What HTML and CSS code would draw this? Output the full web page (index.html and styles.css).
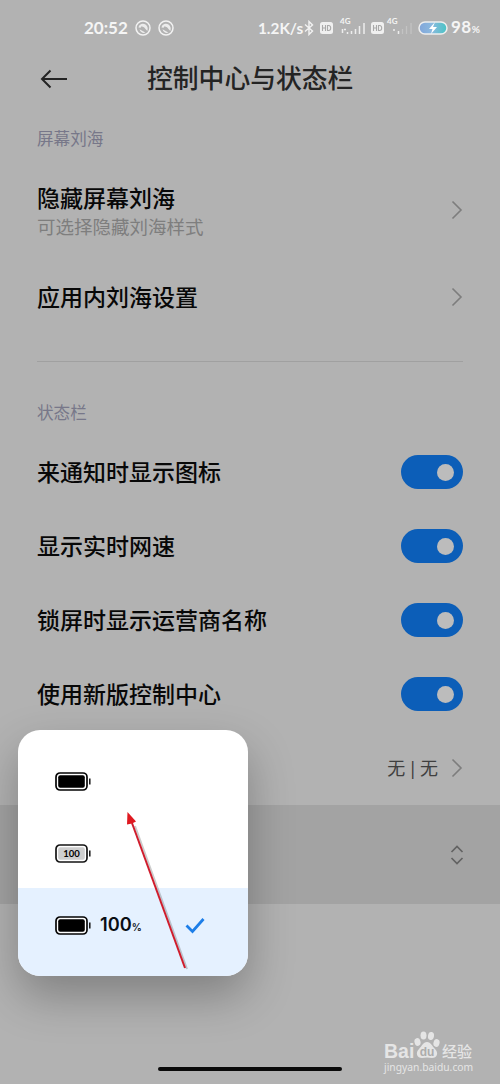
FILE: index.html
```html
<!DOCTYPE html>
<html lang="zh-CN">
<head>
<meta charset="utf-8">
<title>控制中心与状态栏</title>
<link rel="stylesheet" href="styles.css">
</head>
<body>
<svg class="defs" aria-hidden="true">
  <symbol id="chevron" viewBox="0 0 12 20"><path d="M1.500 1.500 10 10l-8.500 8.500" fill="none" stroke="#7d7d7d" stroke-width="1.600"/></symbol>
  <symbol id="ring" viewBox="0 0 16 16"><circle cx="8" cy="8" r="7" fill="none" stroke="#f2f2f2" stroke-width="1.500"/><path d="M3.500 7.500C4 3.800 8 3 10.500 4.500c2 1.300 2.800 3.800 1.800 6.500L9 7.200 6.500 6.300 5.600 7.800zM4.500 9.300l5.800 3.300c-2 1-4.800 0-5.800-3.300z" fill="#ececec"/></symbol>
  <symbol id="hd" viewBox="0 0 13 12"><rect width="13" height="12" rx="2.500" fill="#f0f0f0"/><path d="M2.500 3v6M5.500 3v6M2.500 6h3M7.500 3.500v5h1.200q2-.2 2-2.500t-2-2.500z" fill="none" stroke="#aaa" stroke-width="1.100"/></symbol>
  <symbol id="battery" viewBox="0 0 36 19"><rect x="1" y="1" width="31" height="17" rx="4" fill="#fff" stroke="#050505" stroke-width="1.700"/><rect x="3.200" y="3.200" width="26.600" height="12.600" rx="2"/><path d="M34.800 6.500v6" stroke="#111" stroke-width="1.500"/></symbol>
</svg>
<div class="screen">
  <header class="status">
    <span class="clock">20:52</span>
    <svg class="ring"><use href="#ring"/></svg>
    <svg class="ring ring-second"><use href="#ring"/></svg>
    <span class="speed">1.2K/s</span>
    <svg class="bluetooth" viewBox="0 0 10 16"><path d="M1 4.500 8.500 11 5 14.500v-13L8.500 5 1 11.500" fill="none" stroke="#f2f2f2" stroke-width="1.400"/></svg>
    <svg class="hd"><use href="#hd"/></svg>
    <span class="network"><span class="generation">4G</span><svg class="bars" viewBox="0 0 27 14"><path d="M2.500 9v4M4 9.500h2M7.500 12v2M11.500 11v3M15.500 9v5M19.500 6v8M24 3v11" stroke="#ededed" stroke-width="1.500"/></svg></span>
    <svg class="hd hd-second"><use href="#hd"/></svg>
    <span class="network network-second"><span class="generation">4G</span><svg class="bars" viewBox="0 0 27 14"><path d="M7 9v2M11.500 11v3" stroke="#ededed" stroke-width="1.500"/><path d="M15.500 9v5M19.500 6v8M24 3v11" stroke="#c3c3c3" stroke-width="1.300"/></svg></span>
    <svg class="charge" viewBox="0 0 30 14"><defs><linearGradient id="power"><stop stop-color="#82a6da"/><stop offset=".45" stop-color="#8bb9df"/><stop offset="1" stop-color="#48c4c4"/></linearGradient></defs><rect x="1" y="1" width="28" height="12" rx="6" fill="url(#power)" stroke="#eee" stroke-width="1.500"/><path d="m17 1-6 7h3.500L13 13l6-7h-4z" fill="#fff"/></svg>
    <span class="level">98<small>%</small></span>
  </header>
  <div class="titlebar">
    <svg class="back" viewBox="0 0 28 20"><path d="M27 10H2M10.500 1.500 2 10l8.500 8.500" fill="none" stroke="#242424" stroke-width="2"/></svg>
    <h1 class="title">控制中心与状态栏</h1>
  </div>
  <h2 class="label">屏幕刘海</h2>
  <section class="notch">
    <div class="row"><div><div class="name">隐藏屏幕刘海</div><div class="hint">可选择隐藏刘海样式</div></div><svg class="chevron"><use href="#chevron"/></svg></div>
    <div class="row"><div class="name">应用内刘海设置</div><svg class="chevron"><use href="#chevron"/></svg></div>
  </section>
  <hr class="divider">
  <h2 class="label label-status">状态栏</h2>
  <section>
    <div class="row"><div class="name">来通知时显示图标</div><span class="toggle"></span></div>
    <div class="row"><div class="name">显示实时网速</div><span class="toggle"></span></div>
    <div class="row"><div class="name">锁屏时显示运营商名称</div><span class="toggle"></span></div>
    <div class="row"><div class="name">使用新版控制中心</div><span class="toggle"></span></div>
    <div class="row row-end"><span class="value">无 | 无</span><svg class="chevron"><use href="#chevron"/></svg></div>
    <div class="row row-active"><svg class="sorter" viewBox="0 0 14 20"><path d="m1.500 7 5.500-5.500L12.500 7M1.500 13 7 18.500l5.500-5.500" fill="none" stroke="#626262" stroke-width="1.700"/></svg></div>
  </section>
  <footer class="brand">
    <div class="brand-top">
      <span class="brand-bai">Bai</span>
      <svg class="paw" viewBox="0 0 26 28"><g fill="#e5e5e5"><ellipse cx="3.500" cy="11" rx="3" ry="4" transform="rotate(-15 3.500 11)"/><ellipse cx="9.500" cy="4.500" rx="3" ry="4"/><ellipse cx="17" cy="5" rx="3" ry="4" transform="rotate(10 17 5)"/><ellipse cx="22.500" cy="12" rx="3" ry="4" transform="rotate(15 22.500 12)"/><path d="M13 11c4 0 5 4 8 7 4 4 2 9-3 9q-5-1-10 0c-5 0-7-5-3-9 3-3 4-7 8-7z"/></g><text x="13" y="24.500" class="paw-text">du</text></svg>
      <span class="brand-cn">经验</span>
    </div>
    <div class="brand-url">jingyan.baidu.com</div>
  </footer>
  <div class="home"></div>
</div>
<div class="popup">
  <div class="option"><svg class="battery"><use href="#battery"/></svg></div>
  <div class="option"><svg class="battery" viewBox="0 0 36 19"><rect x="1" y="1" width="31" height="17" rx="4" fill="#fff" stroke="#151515" stroke-width="1.700"/><rect x="3.200" y="3.200" width="26.600" height="12.600" rx="2" fill="#cecece"/><path d="M34.800 6.500v6" stroke="#111" stroke-width="1.500"/><text x="16.500" y="13" class="battery-text">100</text></svg></div>
  <div class="option option-selected"><svg class="battery"><use href="#battery"/></svg><span class="percent">100<small>%</small></span><svg class="check" viewBox="0 0 20 17"><path d="m1.500 8.500 6 6L18.500 2" fill="none" stroke="#1d7ee8" stroke-width="2.800"/></svg></div>
</div>
<svg class="pointer" viewBox="0 0 66 164"><path d="M7 15 59 158" transform="translate(2 1)" fill="none" stroke="#555" stroke-opacity=".3" stroke-width="2"/><path d="M6 13 59 158" fill="none" stroke="#d01c2c" stroke-width="2"/><path d="M1.500 2 1 14.500l5-1 4-2z" fill="#df1920"/></svg>
</body>
</html>
```
FILE: styles.css
```css
body { margin: 0; position: relative; width: 500px; height: 1084px; overflow: hidden; font-family: "Noto Sans", "Noto Sans CJK SC", sans-serif; }
svg { display: block; flex: none; }
.defs { position: absolute; width: 0; height: 0; }
.screen { display: flex; flex-direction: column; height: 1084px; background: #b2b2b2; }
.screen > * { flex: none; }
.status { display: flex; align-items: center; height: 54px; padding: 1px 0 0 84px; box-sizing: border-box; color: #f5f5f5; white-space: nowrap; font-family: Lato, "Noto Sans", sans-serif; font-weight: 700; line-height: 20px; }
.clock { width: 51px; font-size: 17px; }
.ring { width: 16px; height: 16px; }
.ring-second { margin-left: 7px; }
.speed { width: 45px; margin-left: 84px; font-size: 15.300px; }
.bluetooth { width: 10px; height: 16px; margin-left: 1px; }
.hd { width: 13px; height: 12px; margin-left: 6px; }
.hd-second { margin-left: 5px; }
.network { display: flex; flex-direction: column; width: 26px; height: 16px; margin: 0 0 3px 7px; }
.network-second { width: 25px; margin-left: 3px; }
.generation { height: 7px; font-size: 8px; line-height: 7px; }
.bars { width: 27px; height: 14px; margin-top: -5px; }
.charge { width: 30px; height: 14px; margin-left: 6px; }
.level { margin-left: 3px; font-size: 17px; letter-spacing: .5px; }
.level small { font-size: 10px; }
.titlebar { display: flex; align-items: center; height: 50px; padding-left: 40px; }
.back { width: 28px; height: 20px; }
.title { margin: -2px 0 0 79px; font-size: 25.800px; line-height: 50px; font-weight: 500; color: #242424; }
.label { height: 40px; margin: 15px 0 0 37px; font-size: 16.600px; line-height: 40px; font-weight: 400; color: #777789; }
.notch { display: flex; flex-direction: column; gap: 13px; margin-top: 14px; }
.row { display: flex; align-items: center; justify-content: space-between; box-sizing: border-box; height: 74px; padding: 0 37px; }
.name { font-size: 23px; line-height: 32px; font-weight: 500; color: #080808; }
.hint { font-size: 18.500px; line-height: 25px; color: #7e7e7e; }
.chevron { width: 12px; height: 20px; }
.divider { width: 426px; height: 1px; margin: 27px 37px 0; border: 0; background: #a0a0a0; }
.label-status { margin-top: 31px; margin-bottom: 2px; }
.toggle { display: flex; align-items: center; justify-content: flex-end; box-sizing: border-box; width: 62px; height: 34px; padding-right: 9px; border-radius: 17px; background: #0c5eb8; }
.toggle::after { content: ""; width: 17px; height: 17px; border-radius: 50%; background: #bcbcbc; }
.row-end { justify-content: flex-end; gap: 13px; }
.value { font-size: 18px; line-height: 24px; word-spacing: -2.300px; color: #3f3f3f; }
.row-active { justify-content: flex-end; height: 99px; padding-right: 36px; background: #a3a3a3; }
.sorter { width: 14px; height: 20px; }
.brand { width: 96px; height: 44px; margin: 127px 0 0 384px; color: #e5e5e5; }
.brand-top { display: flex; align-items: flex-end; height: 30px; }
.brand-bai { width: 30px; font: 700 19.500px/20px "Liberation Sans", sans-serif; }
.paw { width: 26px; height: 28px; margin-bottom: 2px; }
.paw-text { font: 700 12px "Liberation Sans", sans-serif; text-anchor: middle; fill: #acacac; }
.brand-cn { margin-left: 2px; font-size: 15px; line-height: 20px; font-weight: 500; white-space: nowrap; }
.brand-url { font: 10.300px/13px "Noto Sans", sans-serif; }
.home { width: 184px; height: 4px; margin: -8px auto 0; border-radius: 2px; background: #0a0a0a; }
.popup { position: absolute; left: 18px; top: 730px; width: 230px; height: 246px; overflow: hidden; box-sizing: border-box; padding-top: 15px; border-radius: 22px; background: #fff; box-shadow: 0 20px 46px rgba(0,0,0,.28); }
.option { display: flex; align-items: center; height: 72px; padding-left: 37px; }
.option-selected { height: 74px; margin-top: -1px; padding-bottom: 14px; background: #e5f1ff; }
.battery { width: 36px; height: 19px; }
.battery-text { font: 700 9.500px Lato, "Noto Sans", sans-serif; text-anchor: middle; }
.percent { width: 42px; margin: 1px 0 0 9px; font: 600 18.200px/24px Inter, "Noto Sans", sans-serif; color: #0a0e14; }
.percent small { font-size: 10px; }
.check { width: 20px; height: 17px; margin-left: 43px; }
.pointer { position: absolute; left: 126px; top: 810px; width: 66px; height: 164px; }
```
